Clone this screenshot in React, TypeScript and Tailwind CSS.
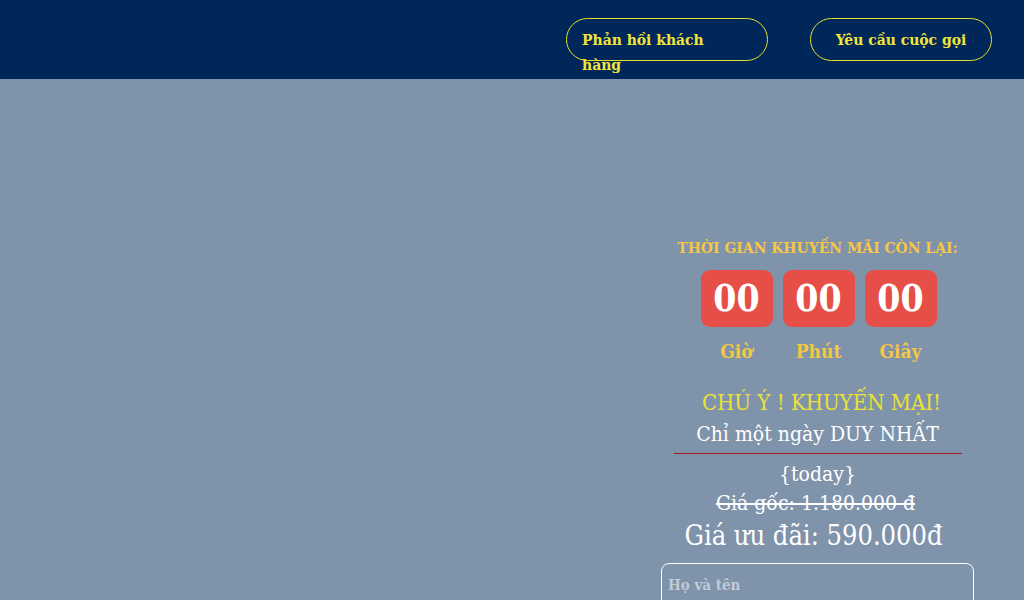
import React from 'react';

const units = [
  { label: 'Giờ', value: '00' },
  { label: 'Phút', value: '00' },
  { label: 'Giây', value: '00' },
];

export default function App() {
  return (
    <div className="min-h-[600px] h-[600px] overflow-hidden bg-[#7f93ab] font-['DejaVu_Serif',serif] font-stretch-condensed">
      <header className="h-[79px] bg-[#002759] flex justify-end items-start pt-[18px] pr-[32px] gap-[42px]">
        <button className="w-[202px] h-[43px] rounded-full border border-[#e6e02a] text-left pl-[15px] pt-[8px] self-start">
          <span className="block w-[150px] text-[15.5px] leading-[25px] font-bold text-[#f2e43a]">
            Phản hồi khách hàng
          </span>
        </button>
        <button className="w-[182px] h-[43px] rounded-full border border-[#e6e02a] text-[15.5px] font-bold text-[#f2e43a]">
          Yêu cầu cuộc gọi
        </button>
      </header>

      <main className="flex justify-end pr-[50px]">
        <div className="w-[313px] flex flex-col items-center pt-[159px]">
          <div className="text-[15.5px] leading-[20px] font-bold text-[#f6c744]">
            THỜI GIAN KHUYẾN MÃI CÒN LẠI:
          </div>
          <div className="flex gap-[10px] mt-[12px] pl-[2px]">
            {units.map(u => (
              <div key={u.label} className="flex flex-col items-center w-[72px]">
                <div className="w-[72px] h-[57px] rounded-[9px] bg-[#e64f47] flex items-center justify-center text-white text-[37px] font-bold">
                  {u.value}
                </div>
                <div className="mt-[10px] text-[19px] leading-[28px] font-bold text-[#f6c744]">
                  {u.label}
                </div>
              </div>
            ))}
          </div>
          <div className="mt-[23px] ml-[8px] text-[22px] leading-[30px] text-[#ede233]">
            CHÚ Ý ! KHUYẾN MẠI!
          </div>
          <div className="text-[21px] leading-[33px] text-white">
            Chỉ một ngày DUY NHẤT
          </div>
          <div className="w-[288px] h-px bg-[#a41c1c] mt-[2px]" />
          <div className="mt-[5px] text-[21px] leading-[30px] text-white">{'{today}'}</div>
          <div className="mr-[4px] text-[21px] leading-[28px] text-white line-through">Giá gốc: 1.180.000 đ</div>
          <div className="mr-[8px] text-[27px] leading-[38px] text-white">Giá ưu đãi: 590.000đ</div>
          <div className="mt-[8px] w-[313px] h-[44px] rounded-[8px] border border-white px-[6px] pt-[9px]">
            <span className="text-[15px] font-bold text-[#c3cbd7]">Họ và tên</span>
          </div>
        </div>
      </main>
    </div>
  );
}
